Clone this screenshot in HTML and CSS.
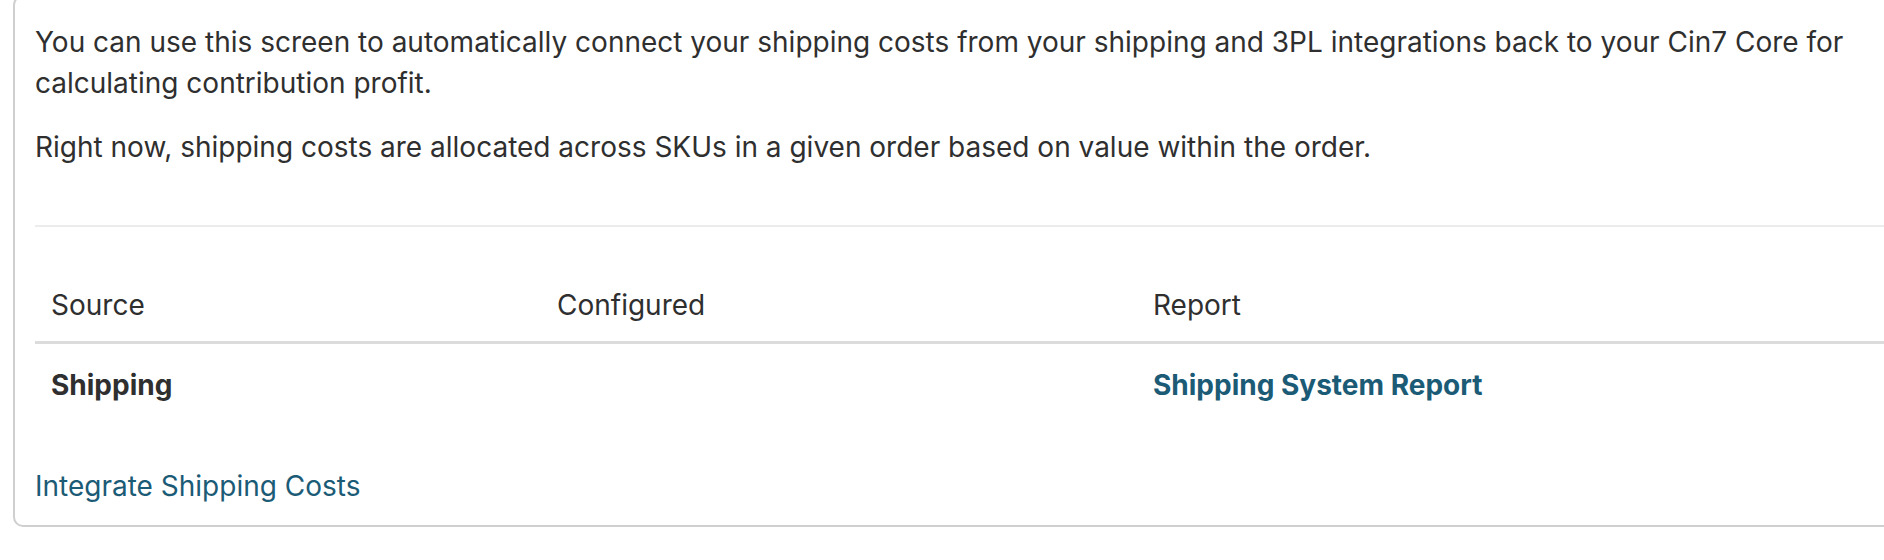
FILE: index.html
```html
<!DOCTYPE html>
<html>
<head>
  <meta charset="UTF-8">
  <title>Shipping costs</title>
<link rel="stylesheet" href="styles.css">
</head>
<body>

  <div class="card">
    <p>You can use this screen to automatically connect your shipping costs from your shipping and 3PL integrations back to your Cin7 Core for calculating contribution profit.</p>
    <p>Right now, shipping costs are allocated across SKUs in a given order based on value within the order.</p>

    <hr class="divider">

    <table class="sources">
      <colgroup>
        <col class="col-source">
        <col class="col-configured">
        <col>
      </colgroup>
      <thead>
        <tr>
          <th>Source</th>
          <th>Configured</th>
          <th>Report</th>
        </tr>
      </thead>
      <tbody>
        <tr>
          <td class="name">Shipping</td>
          <td></td>
          <td><a href="#" class="report-link">Shipping System Report</a></td>
        </tr>
      </tbody>
    </table>

    <a href="#" class="integrate-link">Integrate Shipping Costs</a>
  </div>

</body>
</html>
```

FILE: styles.css
```css
html, body {
  margin: 0;
  padding: 0;
  background: #fff;
  overflow: hidden;
}
body {
  font-family: Inter, "Noto Sans", sans-serif;
  font-size: 28px;
  line-height: 40px;
  color: #2f2f2f;
}
.card {
  width: 1875px;
  margin: -5px 0 0 13px;
  padding: 25px 0 19px 20px;
  border: 2px solid #cfcfcf;
  border-radius: 10px;
}
.card p {
  margin: 0 0 23px;
  line-height: 41px;
}
.card p:last-of-type {
  margin-bottom: 0;
}
.divider {
  margin: 57px 0 0;
  border: 0;
  height: 2px;
  background: #ececec;
}
.sources {
  width: 100%;
  margin-top: 42px;
  border-collapse: collapse;
  table-layout: fixed;
}
.col-source {
  width: 506px;
}
.col-configured {
  width: 596px;
}
.sources th {
  text-align: left;
  font-weight: 400;
  padding: 16px 16px;
  border-bottom: 3px solid #dcdcdc;
}
.sources td {
  padding: 21px 16px 17px;
}
.sources td.name {
  font-weight: 700;
}
a {
  color: #1b5b76;
  text-decoration: none;
}
.report-link {
  font-weight: 700;
}
.integrate-link {
  display: inline-block;
  margin-top: 44px;
}
```
